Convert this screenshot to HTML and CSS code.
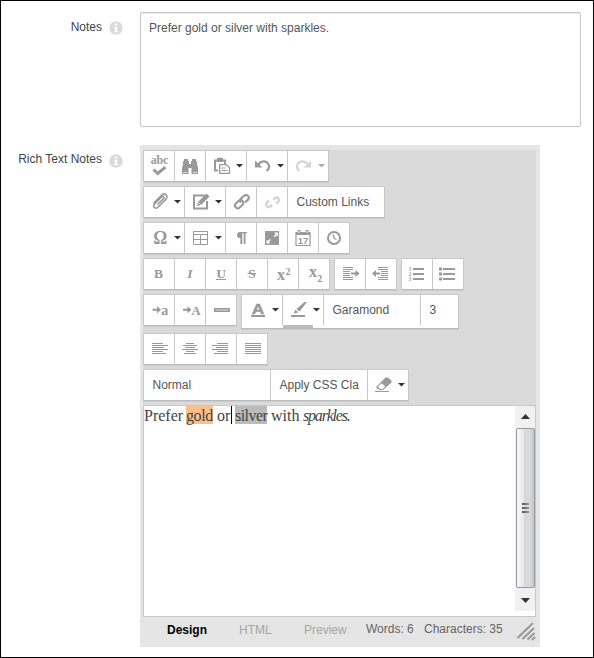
FILE: index.html
```
<!DOCTYPE html>
<html lang="en">
<head>
<meta charset="utf-8">
<title>Notes</title>
<link rel="stylesheet" href="styles.css">
</head>
<body>
<svg class="defs"><defs>
<symbol id="info" viewBox="0 0 14 14"><circle cx="7" cy="7" r="6.7" fill="#dadada"/><path d="M5.8 2.5h2.4v2H5.8zM5 5.7h3.2v4.2h1v1.3H4.9V9.9h1V7H5z" fill="#fff"/></symbol>
<symbol id="caret" viewBox="0 0 7 4"><path d="M0 0h7L3.5 3.5z"/></symbol>
</defs></svg>
<main class="form">
  <div class="field notes">
    <label class="label">Notes<svg class="info"><use href="#info"/></svg></label>
    <div class="textarea">Prefer gold or silver with sparkles.</div>
  </div>
  <div class="field">
    <label class="label">Rich Text Notes<svg class="info"><use href="#info"/></svg></label>
    <section class="editor">
      <div class="toolbar">
        <div class="row">
          <div class="group">
            <button class="btn"><svg viewBox="0 0 30 30"><text x="6.8" y="13.2" font-size="12" textLength="17.5">abc</text><path class="line" stroke-width="3" d="M9.5 18.500l4.2 4 7.800-6.300"/></svg></button>
            <button class="btn"><svg viewBox="0 0 30 30"><path d="M9 8h4v2h1v3h2v-3h1V8h4v2h1v3l1 4v6h-6.500v-6h-3v6H7v-6l1-4v-3h1z"/><path d="M8 21.500h4M18 21.500h4" stroke="#ddd"/></svg></button>
            <button class="btn wide"><svg viewBox="0 0 30 30"><path class="line" stroke-width="2" d="M12 19.500H9v-10h10V13M11 8.500h6"/><path d="M11 7h2.200q.8-1.500 1.600 0H17v4h-6z"/><path class="line" fill="#fff" stroke-width="1.3" d="M13.700 13.700h6.500l3.300 3v5.600h-9.800z"/><path class="line" d="M15.500 17h4M15.500 19.500h6"/></svg><svg class="caret"><use href="#caret"/></svg></button>
            <button class="btn wide"><svg viewBox="0 0 30 30"><path class="line" stroke-width="2.2" d="M10.500 14.500c2.500-4.500 7.500-5.500 10.300-2.300 2.200 2.700 1.500 5.600-1.100 7.600"/><path d="M8 9.500v7h7.500z"/></svg><svg class="caret"><use href="#caret"/></svg></button>
            <button class="btn wide disabled"><svg viewBox="0 0 30 30"><path class="line" stroke-width="2.2" d="M20.500 14.500c-2.500-4.500-7.500-5.500-10.300-2.300-2.200 2.700-1.500 5.600 1.100 7.600"/><path d="M23 9.500v7h-7.500z"/></svg><svg class="caret"><use href="#caret"/></svg></button>
          </div>
        </div>
        <div class="row">
          <div class="group">
            <button class="btn wide"><svg viewBox="0 0 30 30"><path class="line" stroke-width="1.600" d="M13.500 17.500l5.800-5.800c1.500-1.500-.3-3.200-1.800-1.700l-7 7c-2.500 2.600.9 5.700 3.400 3.200l7.800-7.800c3.500-3.500-1-7.300-4.200-4.100l-8 8"/></svg><svg class="caret"><use href="#caret"/></svg></button>
            <button class="btn wide"><svg viewBox="0 0 30 30"><path class="line" stroke-width="2" d="M20 8.500H9v13h13V14"/><path d="M12 19l1-4 8.500-8.500 3 3L16 18z"/><path d="M13.200 15.200l2.600 2.600" stroke="#fff" stroke-width=".8"/></svg><svg class="caret"><use href="#caret"/></svg></button>
            <button class="btn"><svg viewBox="0 0 30 30"><g class="line" stroke-width="2.1" transform="rotate(-43 16 14.500)"><rect x="7.400" y="11.700" width="9.200" height="5.600" rx="2.800"/><path d="M14.400 14.500c0-1.700 1.200-2.800 2.800-2.800h4.200a2.800 2.800 0 010 5.600h-4"/></g></svg></button>
            <button class="btn disabled"><svg viewBox="0 0 30 30"><path class="line" stroke-width="2.500" d="M12 13.400l-2 2c-2.700 2.700 1 6.200 3.700 3.600l1.300-1.300M16.200 12.800l1.300-1.300c2.800-2.800 6.300.6 3.600 3.400l-1.700 1.700"/></svg></button>
            <div class="select w96">Custom Links</div>
          </div>
        </div>
        <div class="row">
          <div class="group">
            <button class="btn wide"><svg viewBox="0 0 30 30"><text x="9.300" y="20.600" font-size="18" textLength="14" lengthAdjust="spacingAndGlyphs">Ω</text></svg><svg class="caret"><use href="#caret"/></svg></button>
            <button class="btn wide"><svg viewBox="0 0 30 30"><path class="line" stroke-width="1" d="M8.500 8.500h14v13h-14zM8 11.500h15M8 16.500h15M15.500 11v10.500"/></svg><svg class="caret"><use href="#caret"/></svg></button>
            <button class="btn"><svg viewBox="0 0 30 30"><path d="M14 9h7v1.200h-1.500V21h-1.800V10.200h-1.400V21h-2v-6H14a3 3 0 010-6z"/></svg></button>
            <button class="btn"><svg viewBox="0 0 30 30"><path d="M8 8h14v14H8z"/><path fill="#fff" d="M17 9.500h4V13.500l-1.400-1.300-2 2-1-1 2-2zM9.500 16.500l1.400 1.400 1.800-1.800 1 1-1.800 1.800 1.600 1.600h-4z"/></svg></button>
            <button class="btn"><svg viewBox="0 0 30 30"><path class="line" stroke-width="1.200" d="M8 9.500h14v13H8z"/><path d="M8 9h14v3H8zM9.500 7h3v4h-3zM17.500 7h3v4h-3z"/><path fill="#fff" d="M10.500 8h1v2h-1zM18.500 8h1v2h-1z"/><text class="sans" x="9.700" y="20.800" font-size="9.500">17</text></svg></button>
            <button class="btn"><svg viewBox="0 0 30 30"><circle class="line" stroke-width="2" cx="15" cy="15" r="6"/><path class="line" stroke-width="1.300" d="M14 11.500l1.200 3.800 2.300 1.200"/></svg></button>
          </div>
        </div>
        <div class="row">
          <div class="group">
            <button class="btn"><svg viewBox="0 0 30 30"><text x="10" y="19.300" font-size="13.500">B</text></svg></button>
            <button class="btn"><svg viewBox="0 0 30 30"><text x="12.300" y="19.300" font-size="13.500" font-style="italic">I</text></svg></button>
            <button class="btn"><svg viewBox="0 0 30 30"><text x="10.300" y="18.800" font-size="13.500">U</text><path d="M10 20h10v1H10z"/></svg></button>
            <button class="btn"><svg viewBox="0 0 30 30"><text x="11.200" y="19.300" font-size="13.500">S</text><path d="M10.500 14h8.500v1h-8.500z"/></svg></button>
            <button class="btn"><svg viewBox="0 0 30 30"><text x="9" y="21" font-size="16">x</text><text x="17.600" y="15.500" font-size="10">2</text></svg></button>
            <button class="btn"><svg viewBox="0 0 30 30"><text x="10" y="18.200" font-size="16">x</text><text x="18.200" y="23" font-size="10">2</text></svg></button>
          </div>
          <div class="group">
            <button class="btn"><svg viewBox="0 0 30 30"><path d="M8 8h10v1H8zM8 10h10v1H8zM8 12h7v1H8zM8 14h7v1H8zM8 16h7v1H8zM8 18h10v1H8zM8 20h10v1H8zM16 13.500h4.500V11l4 3.500-4 3.500v-2.500H16z"/></svg></button>
            <button class="btn"><svg viewBox="0 0 30 30"><path d="M12 8h10v1H12zM12 10h10v1H12zM15 12h7v1h-7zM15 14h7v1h-7zM15 16h7v1h-7zM12 18h10v1H12zM12 20h10v1H12zM14 13.500H10V11l-4 3.500 4 3.500v-2.500h4z"/></svg></button>
          </div>
          <div class="group">
            <button class="btn"><svg viewBox="0 0 30 30"><path d="M11 9h11v2H11zM11 14h11v2H11zM11 19h11v2H11z"/><g font-size="5.500"><text x="6.700" y="11.500">1</text><text x="6.700" y="16.700">2</text><text x="6.700" y="21.900">3</text></g></svg></button>
            <button class="btn"><svg viewBox="0 0 30 30"><path d="M10 9h12v2H10zM10 14h12v2H10zM10 19h12v2H10zM6 8.500h3v3H6zM6 13.500h3v3H6zM6 18.500h3v3H6z"/></svg></button>
          </div>
        </div>
        <div class="row tall">
          <div class="group">
            <button class="btn"><svg viewBox="0 0 30 30"><path d="M8.500 13.800H13v-2.600l4 3.500-4 3.500v-2.500H8.500z"/><text x="17.200" y="20" font-size="14">a</text></svg></button>
            <button class="btn"><svg viewBox="0 0 30 30"><path d="M8 13.800h4.500v-2.600l4 3.500-4 3.500v-2.500H8z"/><text x="16.300" y="20" font-size="13">A</text></svg></button>
            <button class="btn"><svg viewBox="0 0 30 30"><path d="M8 13h16v4H8z"/><path fill="#ddd" d="M9.500 14.500h13v1h-13z"/></svg></button>
          </div>
          <div class="group deep">
            <button class="btn wide"><svg viewBox="0 0 30 30"><text class="sans" x="9.800" y="18.500" font-size="15.500" textLength="12.500" lengthAdjust="spacingAndGlyphs" stroke="#999" stroke-width=".5">A</text><path d="M9 20h14v2H9z"/></svg><svg class="caret"><use href="#caret"/></svg></button>
            <button class="btn wide swatch"><svg viewBox="0 0 30 30"><path d="M8 20h14v2H8zM21.500 7H24l-7.500 9.500-3-2.500zM12.500 14.800l3 2.700-5 .9z"/></svg><svg class="caret"><use href="#caret"/></svg></button>
            <div class="select w96">Garamond</div>
            <div class="select w37">3</div>
          </div>
        </div>
        <div class="row">
          <div class="group">
            <button class="btn"><svg viewBox="0 0 30 30"><path d="M8 9h11v1H8zM8 11h16v1H8zM8 13h12v1H8zM8 15h16v1H8zM8 17h11v1H8zM8 19h14v1H8z"/></svg></button>
            <button class="btn"><svg viewBox="0 0 30 30"><path d="M11 9h8v1h-8zM8 11h14v1H8zM10 13h10v1H10zM7 15h16v1H7zM11 17h8v1h-8zM9 19h12v1H9z"/></svg></button>
            <button class="btn"><svg viewBox="0 0 30 30"><path d="M11 9h11v1H11zM6 11h16v1H6zM10 13h12v1H10zM6 15h16v1H6zM11 17h11v1H11zM8 19h14v1H8z"/></svg></button>
            <button class="btn"><svg viewBox="0 0 30 30"><path d="M8 9h16v1H8zM8 11h16v1H8zM8 13h16v1H8zM8 15h16v1H8zM8 17h16v1H8zM8 19h16v1H8z"/></svg></button>
          </div>
        </div>
        <div class="row">
          <div class="group">
            <div class="select w126">Normal</div>
            <div class="select w96">Apply CSS Cla</div>
            <button class="btn wide"><svg viewBox="0 0 30 30"><path d="M7 21h14v1H7zM8.500 16.500l9-9H20l3.500 3v2L15 20h-3.500l-3-2z"/><path fill="#fff" d="M10 16.500l3.300-3.200 4 3-2.800 2.700H12z"/></svg><svg class="caret"><use href="#caret"/></svg></button>
          </div>
        </div>
      </div>
      <div class="canvas">
        <p class="text"><span class="w1">Prefer</span><span class="w2">gold</span><span class="w3">or</span><span class="w4">silver</span><span class="w5">with</span><em class="w6">sparkles.</em></p>
        <div class="scrollbar">
          <svg class="arrow" viewBox="0 0 9 5"><path d="M4.500 0L9 5H0z"/></svg>
          <div class="thumb"><i></i><i></i><i></i></div>
          <svg class="arrow" viewBox="0 0 9 5"><path d="M0 0h9L4.500 5z"/></svg>
        </div>
      </div>
      <footer class="status">
        <b class="design">Design</b><span class="html">HTML</span><span class="preview">Preview</span><span class="words">Words: 6</span><span class="chars">Characters: 35</span>
        <svg class="grip" viewBox="0 0 20 20"><path d="M1.500 17L17 2M6.500 18L18 7M11.500 18.500l7-6.500M16 19l3-3"/></svg>
      </footer>
    </section>
  </div>
</main>
</body>
</html>
```

FILE: styles.css
```
* { box-sizing: border-box; }
body { margin: 0; background: #fff; }
.defs { display: block; width: 0; height: 0; }
.form {
  width: 594px;
  height: 658px;
  border: 1px solid #000;
  padding-top: 11px;
  font: 12px/16px "Liberation Sans", sans-serif;
  color: #555;
}
.field { display: flex; }
.notes { height: 133px; }
.label {
  display: flex;
  justify-content: flex-end;
  width: 139px;
  padding: 6px 17px 0 0;
  color: #444;
}
.notes .label { padding-top: 7px; }
.notes .info { margin-top: 2px; }
.info { width: 14px; height: 14px; margin: 3px 0 0 7px; }
.textarea {
  width: 441px;
  height: 115px;
  border: 1px solid #c6c6c6;
  border-radius: 2px;
  padding: 7px 8px;
  box-shadow: inset 0 1px 1px #eee;
}
.editor {
  width: 400px;
  height: 502px;
  padding: 5px 4px 0 3px;
  background: #e5e5e5;
}
.toolbar { height: 255px; background: #dadada; }
.row { display: flex; gap: 4px; height: 36px; }
.tall { height: 39px; }
.group {
  display: flex;
  height: 32px;
  border: 1px solid #c8c8c8;
  border-bottom-color: #bbb;
  background: #fff;
  box-shadow: 0 1px 0 #ccc;
}
.deep { height: 35px; }
.btn, .select {
  height: 30px;
  border: 0;
  border-right: 1px solid #c8c8c8;
  padding: 0;
  background: none;
}
.group > :last-child { border-right: 0; width: var(--w, 30px); }
.btn { --w: 30px; position: relative; display: flex; width: 31px; }
.wide { --w: 40px; width: 41px; }
.btn > svg { display: block; flex: none; width: 30px; height: 30px; fill: #999; }
.btn > .caret { width: 7px; height: 4px; margin: 13px 0 0; fill: #333; }
.disabled > svg { opacity: .4; }
.line { fill: none; stroke: #999; }
.line[fill] { fill: #fff; }
.btn text { font-family: "Liberation Serif", serif; font-weight: bold; }
.btn .sans { font-family: "Liberation Sans", sans-serif; }
.swatch::after {
  content: "";
  position: absolute;
  left: 0;
  top: 30px;
  width: 30px;
  height: 3px;
  background: #bbb;
}
.select { padding: 7px 0 0 8.5px; white-space: nowrap; }
.w96 { --w: 96px; width: 97px; }
.w37 { --w: 37px; width: 38px; }
.w126 { --w: 126px; width: 127px; }
.canvas {
  display: flex;
  justify-content: space-between;
  height: 212px;
  border: 1px solid #c8c8c8;
  background: #fff;
}
.text {
  display: flex;
  height: 18px;
  margin: 0;
  font: 16px/19px "Liberation Serif", serif;
  color: #444;
  white-space: nowrap;
}
.text > * { flex: none; }
.w1 { width: 42px; }
.w2 { width: 27px; background: #fcbf8b; letter-spacing: -.4px; }
.w3 { width: 15px; margin: 0 3px 0 4px; border-right: 1px solid #000; }
.w4 { width: 32px; background: #bbb; letter-spacing: -.55px; }
.w5 { width: 36px; padding-left: 4px; }
.w6 { letter-spacing: -1.2px; }
.scrollbar {
  display: flex;
  flex-direction: column;
  align-items: center;
  width: 20px;
  height: 205px;
  background: #f1f1f1;
}
.arrow { width: 9px; height: 5px; margin: 8px 0 9px; fill: #333; }
.arrow:last-child { margin-bottom: 0; margin-top: 10px; }
.thumb {
  display: flex;
  flex-direction: column;
  align-items: center;
  justify-content: center;
  gap: 2px;
  width: 19px;
  height: 160px;
  border: 1px solid #999;
  border-radius: 2px;
  background: linear-gradient(90deg, #f7f7f7, #e9e9eb 38%, #d5d6d9 42%, #dadbde 72%, #c4c5ca);
}
.thumb i { width: 7px; height: 2px; background: linear-gradient(90deg, #555, #999); }
.status { display: flex; height: 30px; line-height: 26px; white-space: nowrap; }
.design { width: 72px; margin-left: 24px; color: #000; }
.html { width: 65px; color: #a5a5a5; }
.preview { width: 62px; color: #a5a5a5; }
.words { width: 58px; line-height: 24px; color: #666; }
.chars { width: 92px; line-height: 24px; color: #666; }
.grip { width: 20px; height: 20px; margin-top: 4px; fill: none; stroke: #999; stroke-width: 2; }
```
